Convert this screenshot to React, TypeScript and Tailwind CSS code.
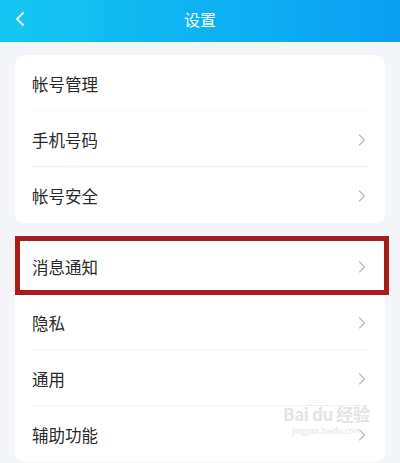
import { ChevronLeft, ChevronRight } from 'lucide-react'

type Row = { label: string; arrow?: boolean }

const GROUP_ONE: Row[] = [
  { label: '帐号管理' },
  { label: '手机号码', arrow: true },
  { label: '帐号安全', arrow: true },
]

const GROUP_TWO: Row[] = [
  { label: '消息通知', arrow: true },
  { label: '隐私', arrow: true },
  { label: '通用', arrow: true },
  { label: '辅助功能', arrow: true },
]

function SettingRow({ label, arrow, last, faint }: Row & { last?: boolean; faint?: boolean }) {
  return (
    <div className="relative flex h-[56px] items-center justify-between pl-[17px] pr-[13px] pt-[2px]">
      <span className="text-[16.5px] text-[#2a2a2a]">{label}</span>
      {arrow ? <ChevronRight className="h-[20px] w-[20px] text-[#b8b8b8]" strokeWidth={1.4} /> : null}
      {!last ? (
        <div
          className={`absolute bottom-0 left-[17px] right-[16px] h-px ${faint ? 'bg-[#f8f8f8]' : 'bg-[#efefef]'}`}
        />
      ) : null}
    </div>
  )
}

export default function App() {
  return (
    <div
      className="relative h-[463px] w-[400px] overflow-hidden bg-[#f4f5f8]"
      style={{ fontFamily: '"Noto Sans CJK SC", "Noto Sans", sans-serif' }}
    >
      {/* ── Header ── */}
      <div className="relative flex h-[42px] items-center justify-center bg-gradient-to-r from-[#16c6f1] to-[#0c9ff3] pb-[5px]">
        <ChevronLeft className="absolute left-[8px] top-[7px] h-[24px] w-[24px] text-white/90" strokeWidth={1.8} />
        <span className="text-[16px] text-white">设置</span>
      </div>

      {/* ── Groups ── */}
      <div className="flex flex-col gap-[15px] px-[15px] pt-[13px]">
        <div className="overflow-hidden rounded-[9px] bg-white">
          {GROUP_ONE.map((r, i) => (
            <SettingRow key={r.label} {...r} faint={i === 0} last={i === GROUP_ONE.length - 1} />
          ))}
        </div>
        <div className="overflow-hidden rounded-[9px] bg-white">
          {GROUP_TWO.map((r, i) => (
            <SettingRow key={r.label} {...r} last={i === GROUP_TWO.length - 1} />
          ))}
        </div>
      </div>

      {/* ── Highlight box ── */}
      <div className="absolute left-[15px] top-[236px] h-[59px] w-[374px] border-[5px] border-[#a81d1b]" />

      {/* ── Watermark ── */}
      <div className="absolute left-[283px] top-[403px] flex flex-col items-center leading-tight text-[#e4e4e4]">
        <span className="text-[17px] font-bold tracking-tight">Bai du 经验</span>
        <span className="mt-[2px] text-[8px]">jingyan.baidu.com</span>
      </div>
    </div>
  )
}
